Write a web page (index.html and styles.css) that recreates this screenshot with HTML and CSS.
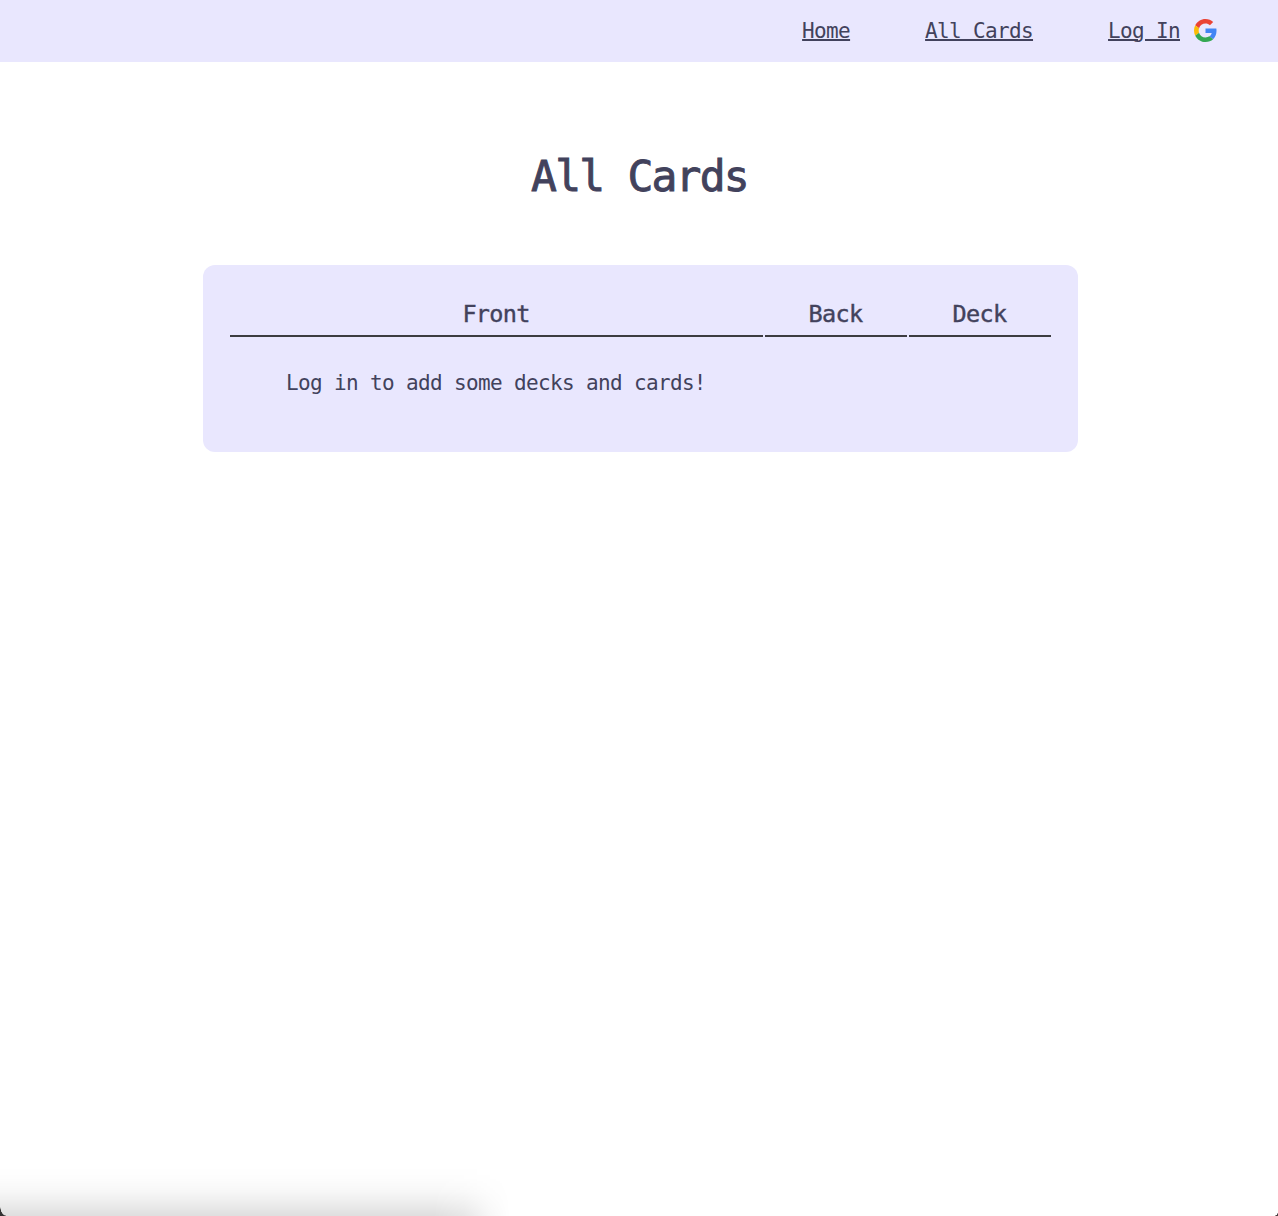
FILE: index.html
```html
<!DOCTYPE html>
<html lang="en">
<head>
<meta charset="utf-8">
<title>All Cards</title>
<link rel="stylesheet" href="styles.css">
</head>
<body>
<nav class="nav">
  <a class="nav-link" href="#">Home</a>
  <a class="nav-link" href="#">All Cards</a>
  <div class="login">
    <a class="nav-link" href="#">Log In</a>
    <svg class="google" viewBox="0 0 48 48" aria-hidden="true">
      <path fill="#ea4335" d="M24 9.5c3.54 0 6.71 1.22 9.21 3.6l6.85-6.85C35.9 2.38 30.47 0 24 0 14.62 0 6.51 5.38 2.56 13.22l7.98 6.19C12.43 13.72 17.74 9.5 24 9.5z"/>
      <path fill="#4285f4" d="M46.98 24.55c0-1.57-.15-3.09-.38-4.55H24v9.02h12.94c-.58 2.96-2.26 5.48-4.78 7.18l7.73 6c4.51-4.18 7.09-10.36 7.09-17.65z"/>
      <path fill="#fbbc05" d="M10.53 28.59c-.48-1.45-.76-2.99-.76-4.59s.27-3.14.76-4.59l-7.98-6.19C.92 16.46 0 20.12 0 24c0 3.88.92 7.54 2.56 10.78l7.97-6.19z"/>
      <path fill="#34a853" d="M24 48c6.48 0 11.93-2.13 15.89-5.81l-7.73-6c-2.15 1.45-4.92 2.3-8.16 2.3-6.26 0-11.57-4.22-13.47-9.91l-7.98 6.19C6.51 42.62 14.62 48 24 48z"/>
    </svg>
  </div>
</nav>
<main class="main">
  <h1 class="title">All Cards</h1>
  <section class="panel">
    <table class="cards">
      <colgroup><col class="col-front"><col class="col-side"><col class="col-side"></colgroup>
      <thead><tr><th>Front</th><th>Back</th><th>Deck</th></tr></thead>
      <tbody><tr><td>Log in to add some decks and cards!</td><td></td><td></td></tr></tbody>
    </table>
  </section>
</main>
<div class="edge-shadow"></div>
<div class="corner corner-left"></div>
<div class="corner corner-right"></div>
</body>
</html>
```
FILE: styles.css
```css
* { box-sizing: border-box; }

body {
  margin: 0;
  height: 1216px;
  position: relative;
  overflow: hidden;
  background: #fff;
  color: #42425c;
  font-family: "DejaVu Sans Mono", monospace;
  font-size: 21px;
  letter-spacing: -0.65px;
}

.nav {
  height: 62px;
  padding: 0 61px 1px 0;
  display: flex;
  justify-content: flex-end;
  align-items: center;
  gap: 75px;
  background: #e9e7fe;
}

.nav-link {
  color: inherit;
  line-height: 24px;
  text-decoration: underline;
  text-decoration-thickness: 2px;
  text-underline-offset: 1px;
}

.login {
  display: flex;
  align-items: center;
  gap: 14px;
}

.google {
  width: 23px;
  height: 23px;
  margin-bottom: 1px;
}

.title {
  margin: 0;
  padding: 87px 0 0 1px;
  text-align: center;
  font-size: 43px;
  font-weight: 400;
  letter-spacing: -1.8px;
  line-height: 54px;
  -webkit-text-stroke: 0.9px #42425c;
}

.panel {
  width: 875px;
  height: 187px;
  margin: 62px 0 0 203px;
  padding: 25px;
  border-radius: 12px;
  background: #e9e7fe;
}

.cards {
  width: 825px;
  table-layout: fixed;
  border-spacing: 2px;
}

.col-front { width: 533px; }
.col-side { width: 142px; }

.cards th {
  height: 45px;
  padding: 2px 1px 1px 0;
  border-bottom: 2px solid #3c3c40;
  font-size: 23.5px;
  font-weight: 400;
  letter-spacing: -0.7px;
  line-height: 40px;
  -webkit-text-stroke: 0.4px #42425c;
}

.cards td {
  padding: 24px 1px 0 0;
  text-align: center;
  line-height: 41px;
}

.edge-shadow {
  position: absolute;
  left: 0;
  bottom: 0;
  width: 510px;
  height: 50px;
  background: linear-gradient(to top, rgba(0, 0, 0, 0.13), rgba(0, 0, 0, 0.075) 24%, rgba(0, 0, 0, 0.03) 50%, rgba(0, 0, 0, 0.008) 76%, transparent);
  -webkit-mask-image: linear-gradient(to right, #000 85%, rgba(0, 0, 0, 0.75) 91%, rgba(0, 0, 0, 0.25) 96%, transparent);
  mask-image: linear-gradient(to right, #000 85%, rgba(0, 0, 0, 0.75) 91%, rgba(0, 0, 0, 0.25) 96%, transparent);
}

.corner {
  position: absolute;
  bottom: 0;
}

.corner-left {
  left: 0;
  width: 6px;
  height: 10px;
  background: radial-gradient(ellipse 6px 10px at 100% 0, transparent 92%, #333 100%);
}

.corner-right {
  right: 0;
  width: 4px;
  height: 4px;
  background: radial-gradient(circle 4px at 0 0, transparent 90%, #493f40 100%);
}
```
